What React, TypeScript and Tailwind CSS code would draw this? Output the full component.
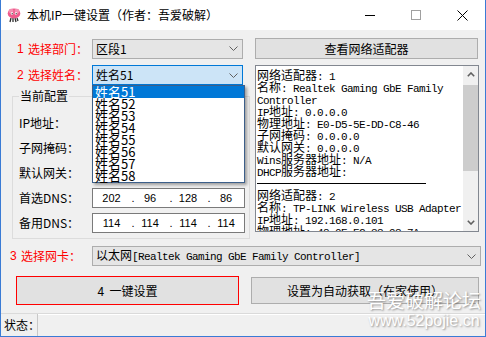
import type { ReactNode } from 'react';

const TEXT_LINES = [
  '网络适配器: 1',
  '名称: Realtek Gaming GbE Family',
  'Controller',
  'IP地址: 0.0.0.0',
  '物理地址: E0-D5-5E-DD-C8-46',
  '子网掩码: 0.0.0.0',
  '默认网关: 0.0.0.0',
  'Wins服务器地址: N/A',
  'DHCP服务器地址:',
  '---',
  '网络适配器: 2',
  '名称: TP-LINK Wireless USB Adapter',
  'IP地址: 192.168.0.101',
  '物理地址: 48-0E-EC-33-93-7A',
];

const NAMES = ['姓名51', '姓名52', '姓名53', '姓名54', '姓名55', '姓名56', '姓名57', '姓名58'];

const CJK = /[\u3000-\u9fff\uff00-\uffef]/;

// mono text where latin is 6px per char and CJK is 12px
function Mixed({ text }: { text: string }) {
  const parts = text.split(/([\u3000-\u9fff\uff00-\uffef]+)/).filter((p) => p !== '');
  return (
    <>
      {parts.map((p, i) =>
        CJK.test(p) ? (
          <span key={i} className="font-['Noto_Sans_CJK_SC',sans-serif] text-[12px] tracking-normal">
            {p}
          </span>
        ) : (
          <span key={i} className="font-['Liberation_Mono',monospace] text-[11px] tracking-[-0.6px] whitespace-pre">
            {p}
          </span>
        ),
      )}
    </>
  );
}

function Chevron() {
  return (
    <svg width="9" height="5" viewBox="0 0 9 5">
      <path d="M0.5 0.5 L4.5 4.5 L8.5 0.5" fill="none" stroke="#606060" strokeWidth="1" />
    </svg>
  );
}

function ScrollArrow({ up = false }: { up?: boolean }) {
  return (
    <svg width="8" height="5" viewBox="0 0 8 5" className={up ? 'rotate-180' : ''}>
      <path d="M0.8 0.8 L4 4 L7.2 0.8" fill="none" stroke="#606060" strokeWidth="1.6" />
    </svg>
  );
}

function AppIcon() {
  return (
    <svg width="14" height="16" viewBox="0 0 14 16">
      <path d="M4 11 L3 15 M6 11 L6 15 M8 11 L9 15 M10 11 L11 14" stroke="#2d2d2d" strokeWidth="1.3" />
      <ellipse cx="7" cy="6.5" rx="6.3" ry="5" fill="#ef5b8c" />
      <ellipse cx="4" cy="4" rx="2.5" ry="2.2" fill="#f48fb1" />
      <ellipse cx="10" cy="4" rx="2.5" ry="2.2" fill="#f48fb1" />
      <circle cx="5" cy="6.5" r="1.3" fill="#fff" />
      <circle cx="9" cy="6.5" r="1.3" fill="#fff" />
      <circle cx="5.2" cy="6.7" r="0.6" fill="#222" />
      <circle cx="9.2" cy="6.7" r="0.6" fill="#222" />
    </svg>
  );
}

function Combo({ className, focused = false, children }: { className: string; focused?: boolean; children: ReactNode }) {
  return (
    <div
      className={`${className} h-[20px] flex items-center justify-between pl-[3px] pr-[4px] border ${
        focused ? 'bg-[#cce4f7] border-[#0078d7]' : 'bg-[#e5e5e5] border-[#adadad]'
      }`}
    >
      <span className="whitespace-nowrap leading-[16px]">{children}</span>
      <Chevron />
    </div>
  );
}

function RedLabel({ num, text, className }: { num: string; text: string; className: string }) {
  return (
    <span className={`${className} text-[#ff0000] whitespace-nowrap flex`}>
      <span className="font-['Liberation_Sans',sans-serif] w-[11px]">{num}</span>
      <span>{text}</span>
    </span>
  );
}

function IpBox({ parts }: { parts?: string[] }) {
  return (
    <div className="w-[153px] h-[20px] border border-[#7a7a7a] bg-white flex items-center font-['Liberation_Sans',sans-serif] text-[11px]">
      {parts && (
        <>
          <span className="w-[37px] text-center">{parts[0]}</span>
          <span className="w-[6px] text-center">.</span>
          <span className="w-[32px] pr-[4px] text-center">{parts[1]}</span>
          <span className="w-[6px] text-center">.</span>
          <span className="w-[32px] pr-[4px] text-center">{parts[2]}</span>
          <span className="w-[6px] text-center">.</span>
          <span className="w-[32px] pr-[4px] text-center">{parts[3]}</span>
        </>
      )}
    </div>
  );
}

function ConfigRow({ label, parts }: { label: string; parts?: string[] }) {
  return (
    <div className="flex items-center h-[20px]">
      <span className="w-[73px] leading-[16px]">{label}</span>
      <IpBox parts={parts} />
    </div>
  );
}

export default function App() {
  return (
    <div className="w-[486px] h-[337px] flex flex-col overflow-hidden bg-[#f0f0f0] border-x border-b border-[#3a7bd5] text-black font-['Noto_Sans_CJK_SC',sans-serif] text-[12px] leading-[16px]">
      {/* title bar */}
      <div className="h-[30px] shrink-0 bg-white flex items-center pl-[6px]">
        <AppIcon />
        <span className="ml-[6px] text-[12px] whitespace-nowrap">本机IP一键设置（作者：吾爱破解）</span>
        <div className="ml-auto flex h-full">
          <div className="w-[46px] flex items-center justify-center">
            <div className="w-[10px] h-px bg-black" />
          </div>
          <div className="w-[46px] flex items-center justify-center">
            <div className="w-[10px] h-[10px] border border-[#a0a0a0]" />
          </div>
          <div className="w-[46px] flex items-center justify-center">
            <svg width="11" height="11" viewBox="0 0 11 11">
              <path d="M0.5 0.5 L10.5 10.5 M10.5 0.5 L0.5 10.5" stroke="#000" strokeWidth="1" />
            </svg>
          </div>
        </div>
      </div>

      <div className="flex-1 flex flex-col relative">
        {/* row 1 */}
        <div className="mt-[8px] flex items-center h-[21px] pl-[16px]">
          <RedLabel className="w-[75px]" num="1" text="选择部门：" />
          <Combo className="w-[151px]">区段1</Combo>
          <button className="ml-[12px] w-[223px] h-[21px] border border-[#adadad] bg-[#e1e1e1] text-[12px] leading-[16px]">
            查看网络适配器
          </button>
        </div>

        {/* main */}
        <div className="mt-[6px] flex pl-[11px] items-start">
          <div className="w-[238px] flex flex-col">
            <div className="flex items-center h-[20px] pl-[5px]">
              <RedLabel className="w-[75px]" num="2" text="选择姓名：" />
              <div className="relative z-10">
                <Combo className="w-[151px]" focused>
                  姓名51
                </Combo>
                <div className="absolute left-0 top-[20px] w-[153px] border border-[#3c5f8a] bg-white shadow-[2px_2px_3px_rgba(0,0,0,0.35)]">
                  {NAMES.map((n, i) => (
                    <div
                      key={n}
                      className={`h-[12px] pl-[2px] text-[13px] leading-[12px] whitespace-nowrap ${
                        i === 0 ? 'bg-[#0078d7] text-white' : ''
                      }`}
                    >
                      {n}
                    </div>
                  ))}
                </div>
              </div>
            </div>

            <div className="mt-[11px] h-[143px] border border-[#dcdcdc] relative pt-[16px] pl-[6px] flex flex-col gap-[5px]">
              <span className="absolute left-[6px] top-[-9px] px-[1px] bg-[#f0f0f0] leading-[16px]">当前配置</span>
              <ConfigRow label="IP地址：" />
              <ConfigRow label="子网掩码：" />
              <ConfigRow label="默认网关：" />
              <ConfigRow label="首选DNS：" parts={['202', '96', '128', '86']} />
              <ConfigRow label="备用DNS：" parts={['114', '114', '114', '114']} />
            </div>
          </div>

          <div className="ml-[5px] w-[224px] h-[167px] border border-[#828790] bg-white flex">
            <div className="flex-1 overflow-hidden pl-[1px] pt-[3px]">
              {TEXT_LINES.map((l, i) =>
                l === '---' ? (
                  <div key={i} className="h-[12px] flex items-center">
                    <div className="w-[169px] h-px bg-black" />
                  </div>
                ) : (
                  <div key={i} className="h-[12px] leading-[12px] whitespace-nowrap">
                    <Mixed text={l} />
                  </div>
                ),
              )}
            </div>
            <div className="w-[15px] flex flex-col bg-[#f0f0f0]">
              <div className="h-[17px] flex items-center justify-center">
                <ScrollArrow up />
              </div>
              <div className="mt-[2px] h-[86px] bg-[#cdcdcd]" />
              <div className="flex-1" />
              <div className="h-[17px] flex items-center justify-center">
                <ScrollArrow />
              </div>
            </div>
          </div>
        </div>

        {/* row 3 */}
        <div className="mt-[7px] flex items-center h-[20px] pl-[9px]">
          <RedLabel className="w-[82px]" num="3" text="选择网卡：" />
          <Combo className="w-[389px]">
            <Mixed text="以太网[Realtek Gaming GbE Family Controller]" />
          </Combo>
        </div>

        {/* buttons */}
        <div className="mt-[10px] flex items-start pl-[15px]">
          <button className="w-[223px] h-[29px] border border-[#ff0000] bg-[#e1e1e1] text-[12px] leading-[16px] whitespace-pre">
            4  一键设置
          </button>
          <button className="ml-[12px] mt-[1px] w-[228px] h-[27px] border border-[#adadad] bg-[#e1e1e1] text-[12px] leading-[16px]">
            设置为自动获取（在家使用）
          </button>
        </div>

        {/* status bar */}
        <div className="mt-auto h-[23px] border-t border-[#dadada] flex items-stretch">
          <span className="w-[36px] pl-[3px] flex items-center whitespace-nowrap">状态：</span>
          <div className="w-px bg-[#c8c8c8]" />
          <div className="flex-1 border-t border-white" />
        </div>

        {/* watermark */}
        <div className="absolute right-[4px] bottom-[5px] flex flex-col items-center text-white [text-shadow:1px_1px_2px_rgba(0,0,0,0.4)] pointer-events-none">
          <span className="text-[19px] leading-[22px]">吾爱破解论坛</span>
          <span className="font-['Liberation_Sans',sans-serif] text-[16px] leading-[20px]">www.52pojie.cn</span>
        </div>
      </div>
    </div>
  );
}
